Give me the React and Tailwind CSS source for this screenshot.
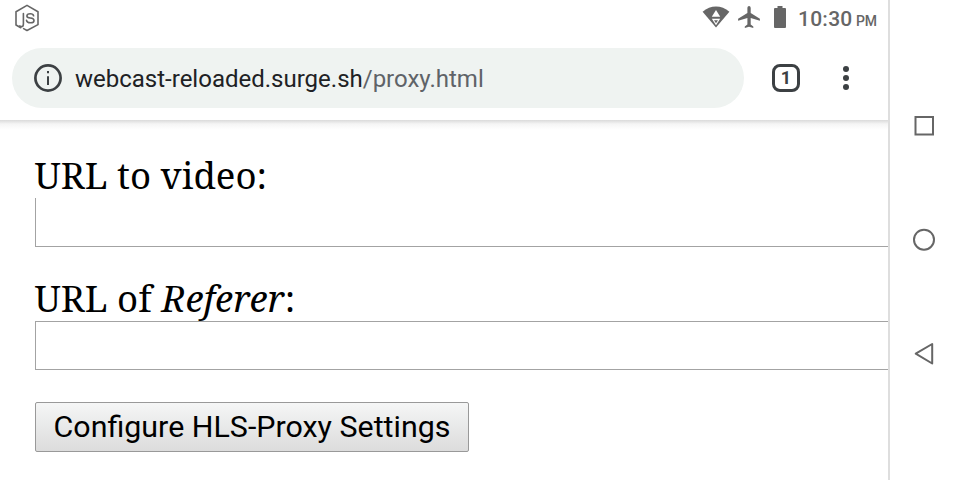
function StatusBar() {
  return (
    <div className="flex h-9 items-center justify-between pl-[14px] pr-[10px] text-[#666666]">
      <svg className="h-[30px] w-[26px]" viewBox="0 0 26 30" fill="none" stroke="currentColor" strokeWidth="1.6" strokeLinejoin="round" strokeLinecap="round">
        <path d="M6.8 24.7L2 22V8.7L13 2.4L24 8.7V21.6L13 27.5L9.6 25.6" />
        <path d="M9.4 10.6V20.9Q9.4 23.6 7.4 23.6Q6.8 23.6 5.8 22.9" />
        <path d="M19.6 12.8Q19.2 10.8 16.3 10.8Q12.9 10.8 12.9 12.9Q12.9 14.7 16.3 15Q20 15.3 20 17.4Q20 19.8 16.4 19.8Q12.8 19.8 12.5 17.4" />
      </svg>
      <div className="flex items-center">
        <svg className="h-9 w-[96px]" viewBox="700 0 96 36" fill="currentColor">
          <path d="M702.6 11.8C710.5 4.8 721.5 4.8 729.4 11.8L716 27.5Z" />
          <path d="M716 10L720.2 16.8H711.8Z" fill="white" />
          <path d="M711.8 18.8H720.2L716 25.2Z" fill="white" />
          <path d="M714 20.2H718L716 23.2Z" />
          <path d="M759.9 20.8V18.7L750.7 12.9V8C750.7 5.3 747.4 5.3 747.4 8V12.9L738.1 18.7V20.8L747.4 18V24.5L744.8 26.4V28L749 26.8L753.3 28V26.4L750.7 24.5V18Z" />
          <path d="M777.5 6H782.5V8H785Q786 8 786 9V27Q786 28 785 28H775Q774 28 774 27V9Q774 8 775 8H777.5Z" />
        </svg>
        <div className="mt-0.5 flex items-baseline font-[Roboto,sans-serif] font-medium whitespace-nowrap">
          <span className="ml-[2px] w-[58px] text-[21px] leading-9 tracking-[0.25px]">10:30</span>
          <span className="w-[22px] text-[14px] tracking-[-0.1px]">PM</span>
        </div>
      </div>
    </div>
  );
}

function Toolbar() {
  return (
    <div className="flex h-[72px] items-center pl-3">
      <div className="flex h-[60px] w-[732px] items-center rounded-full bg-[#eff3f1] pl-[21px]">
        <svg className="h-[30px] w-[30px]" viewBox="0 0 30 30" fill="none" stroke="#3c4043">
          <circle cx="15" cy="15" r="12.6" strokeWidth="2.7" />
          <path d="M15 13.3V22" strokeWidth="2" />
          <path d="M15 8V10.3" strokeWidth="2" />
        </svg>
        <span className="mt-0.5 ml-3 font-[Roboto,sans-serif] text-[24px] leading-[30px] whitespace-nowrap text-[#202124]">
          webcast-reloaded.surge.sh<span className="text-[#5f6368]">/proxy.html</span>
        </span>
      </div>
      <div className="ml-7 flex h-7 w-7 items-center justify-center rounded-[8px] border-[3px] border-[#3c4043] font-[Roboto,sans-serif] text-[18px] leading-none font-bold text-[#3c4043]">1</div>
      <div className="ml-[43px] flex flex-col gap-[3px]">
        <span className="h-1.5 w-1.5 rounded-full bg-[#3c4043]" />
        <span className="h-1.5 w-1.5 rounded-full bg-[#3c4043]" />
        <span className="h-1.5 w-1.5 rounded-full bg-[#3c4043]" />
      </div>
    </div>
  );
}

function NavigationBar() {
  return (
    <nav className="flex w-[70px] flex-col items-center bg-white pt-[111px] text-[#666666]">
      <svg className="h-[30px] w-[30px]" viewBox="0 0 30 30" fill="none" stroke="currentColor" strokeWidth="2">
        <rect x="5.5" y="6" width="17.5" height="17.5" />
      </svg>
      <svg className="mt-[84px] h-[30px] w-[30px]" viewBox="0 0 30 30" fill="none" stroke="currentColor" strokeWidth="2">
        <circle cx="14" cy="14.7" r="10" />
      </svg>
      <svg className="mt-[84px] h-[30px] w-[30px]" viewBox="0 0 30 30" fill="none" stroke="currentColor" strokeWidth="2" strokeLinejoin="round">
        <path d="M22.2 5V24.5L5.7 14.7Z" />
      </svg>
    </nav>
  );
}

export default function App() {
  return (
    <div className="flex h-[480px] w-[960px] overflow-hidden bg-white">
      <div className="flex w-[888px] flex-col overflow-hidden">
        <header className="h-[120px] shrink-0">
          <StatusBar />
          <div className="h-1.5" />
          <Toolbar />
        </header>
        <div className="h-2.5 shrink-0 bg-linear-to-b from-[#dadada] via-[#f5f5f5] via-40% to-white" />
        <main className="flex flex-col pl-[35px] text-black">
          <label className="mt-[22px] -ml-[0.5px] h-[46px] font-['Noto_Serif','Droid_Serif','DejaVu_Serif',serif] text-[36.6px] leading-[46px] whitespace-nowrap">URL to video:</label>
          <input className="h-[49px] w-full border-b border-l border-[#a3a3a3] bg-transparent outline-none" />
          <label className="mt-[29px] -ml-[0.5px] h-[45px] font-['Noto_Serif','Droid_Serif','DejaVu_Serif',serif] text-[36.6px] leading-[44px] whitespace-nowrap">URL of <em>Referer</em>:</label>
          <input className="h-[49px] w-full border-y border-l border-[#a3a3a3] bg-transparent outline-none" />
          <button className="mt-8 h-[50px] w-[434px] rounded-[2px] border border-[#999999] bg-linear-to-b from-[#f5f6f6] to-[#dcdcdc] font-[Roboto,sans-serif] text-[30.4px] leading-[46px] whitespace-nowrap">Configure HLS-Proxy Settings</button>
        </main>
      </div>
      <div className="w-0.5 bg-[#dedede]" />
      <NavigationBar />
    </div>
  );
}
